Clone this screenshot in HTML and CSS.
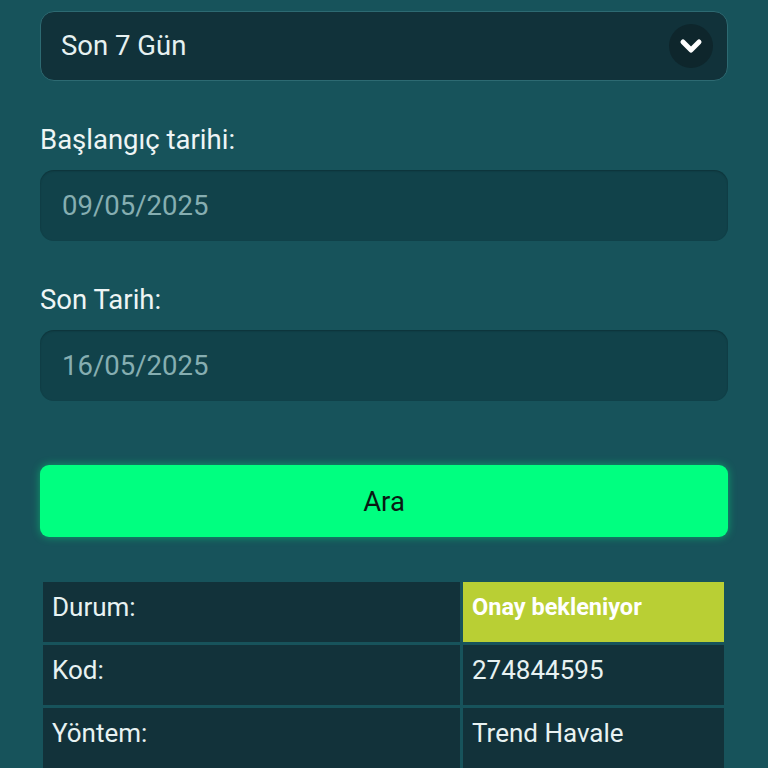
FILE: index.html
```html
<!DOCTYPE html>
<html lang="tr">
<head>
<meta charset="utf-8">
<link rel="stylesheet" href="styles.css">
</head>
<body>
<div class="page">
  <div class="select">
    <span class="select-text">Son 7 Gün</span>
    <span class="chev">
      <svg width="30" height="30" viewBox="0 0 30 30"><path d="M7 11 L15 19 L23 11" fill="none" stroke="#ffffff" stroke-width="5" stroke-linecap="round" stroke-linejoin="round"/></svg>
    </span>
  </div>
  <div class="label first">Başlangıç tarihi:</div>
  <div class="input">09/05/2025</div>
  <div class="label">Son Tarih:</div>
  <div class="input">16/05/2025</div>
  <button class="btn">Ara</button>
  <table class="info">
    <tr><td class="k">Durum:</td><td class="v status">Onay bekleniyor</td></tr>
    <tr><td class="k">Kod:</td><td class="v">274844595</td></tr>
    <tr><td class="k">Yöntem:</td><td class="v">Trend Havale</td></tr>
  </table>
</div>
</body>
</html>
```
FILE: styles.css
```css
html, body {
  margin: 0;
  padding: 0;
  background: #17535b;
  font-family: Roboto, "Noto Sans", sans-serif;
  color: #e8f2f2;
}
.page {
  padding: 11px 40px 0 40px;
  height: 757px;
  overflow: hidden;
}
.select {
  height: 68px;
  border: 1px solid #2d6a72;
  border-radius: 14px;
  background: #11323a;
  display: flex;
  align-items: center;
  justify-content: space-between;
  padding: 0 14px 0 20px;
}
.select-text {
  font-size: 27.5px;
  color: #e6f1f1;
  margin-top: -2px;
}
.chev {
  width: 44px;
  height: 44px;
  border-radius: 50%;
  background: #0e262c;
  display: flex;
  align-items: center;
  justify-content: center;
}
.label {
  font-size: 27.5px;
  line-height: 28px;
  margin-top: 45px;
  margin-bottom: 16px;
  color: #eef5f5;
}
.input {
  height: 71px;
  box-sizing: border-box;
  border-radius: 14px;
  background: #11424a;
  box-shadow: inset 0 1px 2px rgba(0,0,0,0.25);
  display: flex;
  align-items: center;
  padding-left: 22px;
  font-size: 27.5px;
  color: #86aeb1;
}
.btn {
  display: block;
  width: 100%;
  margin-top: 64px;
  height: 72px;
  border: none;
  border-radius: 9px;
  background: #00ff80;
  box-shadow: 0 0 8px rgba(0, 255, 128, 0.45);
  font-family: Roboto, sans-serif;
  font-size: 27.5px;
  color: #0a1a14;
}
.info {
  margin-top: 42px;
  border-spacing: 3px;
  width: 687px;
  margin-left: 0;
}
.info td {
  background: #12323a;
  font-size: 26px;
  line-height: 30px;
  vertical-align: top;
  padding: 10px 9px 0 9px;
  height: 50px;
  color: #e8f2f2;
}
.info td.k { width: 399px; }
.info td.status {
  background: #b9cf34;
  font-weight: bold;
  font-size: 23.5px;
  color: #ffffff;
}
```
